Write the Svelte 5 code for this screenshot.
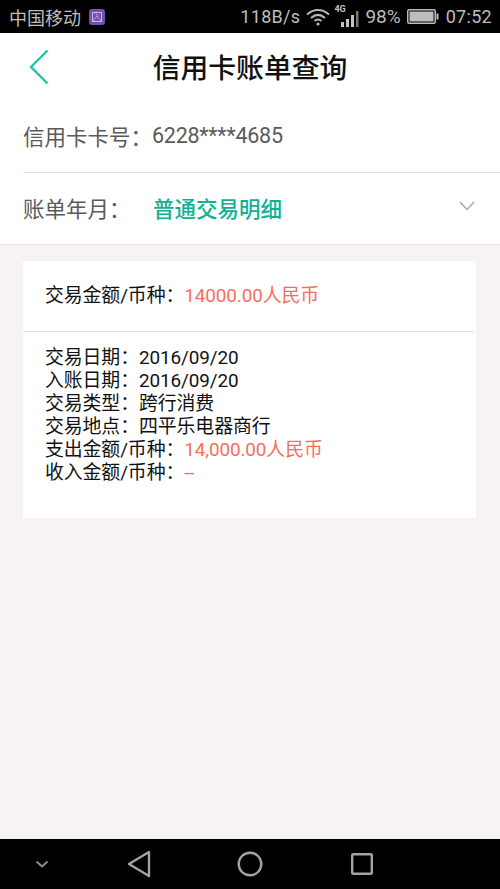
<script>
  const details = [
    { label: "交易日期：", value: "2016/09/20" },
    { label: "入账日期：", value: "2016/09/20" },
    { label: "交易类型：", value: "跨行消费" },
    { label: "交易地点：", value: "四平乐电器商行" },
    { label: "支出金额/币种：", value: "14,000.00人民币", money: true },
    { label: "收入金额/币种：", value: "--", money: true }
  ];
</script>

<div class="page">
  <div class="status">
    <div class="status-left">
      <span>中国移动</span>
      <svg class="sim" viewBox="0 0 16 16" width="16" height="16">
        <rect width="16" height="16" rx="3" fill="#7350b0" />
        <rect x="3.5" y="3.5" width="9" height="9" fill="none" stroke="#c9b6e6" stroke-width="1" />
        <path d="M3.5 12.5 L8 7 M8 7 L12.5 12.5 M6 3.5 L9 7" fill="none" stroke="#c9b6e6" stroke-width="0.8" />
      </svg>
    </div>
    <div class="status-right">
      <span class="speed">118B/s</span>
      <svg class="wifi" viewBox="0 0 24 18" width="24" height="18">
        <path d="M1 6.5 C7.5 0.5 16.5 0.5 23 6.5" fill="none" stroke="#b8b8b8" stroke-width="2" />
        <path d="M5 10 C9.5 6 14.5 6 19 10" fill="none" stroke="#b8b8b8" stroke-width="2" />
        <path d="M8.5 13 C10.7 11.2 13.3 11.2 15.5 13" fill="none" stroke="#b8b8b8" stroke-width="2" />
        <circle cx="12" cy="16" r="1.6" fill="#b8b8b8" />
      </svg>
      <div class="signal">
        <span class="net">4G</span>
        <svg viewBox="0 0 18 16" width="18" height="16">
          <rect x="0" y="11" width="3" height="5" fill="#c4c4c4" />
          <rect x="5" y="8" width="3" height="8" fill="#c4c4c4" />
          <rect x="10" y="4" width="3" height="12" fill="#c4c4c4" />
          <rect x="15" y="0" width="2.5" height="16" fill="#777" />
        </svg>
      </div>
      <span class="pct">98%</span>
      <svg class="battery" viewBox="0 0 32 15" width="32" height="15">
        <rect x="0.75" y="0.75" width="27.5" height="13.5" rx="1.5" fill="none" stroke="#bdbdbd" stroke-width="1.5" />
        <rect x="2.5" y="2.5" width="24" height="10" fill="#bdbdbd" />
        <rect x="29.5" y="4.5" width="2" height="6" fill="#bdbdbd" />
      </svg>
      <span class="time">07:52</span>
    </div>
  </div>

  <div class="top">
    <header>
      <svg class="back" viewBox="0 0 22 36" width="22" height="36">
        <path d="M19.5 1.5 L3 18 L19.5 34.5" fill="none" stroke="#1fc4a6" stroke-width="2.4" />
      </svg>
      <h1>信用卡账单查询</h1>
    </header>

    <div class="row">
      <span class="row-label">信用卡卡号：</span>
      <span class="card-no">6228****4685</span>
    </div>
    <div class="row last">
      <span class="row-label month">账单年月：</span>
      <span class="kind">普通交易明细</span>
      <svg class="chevron" viewBox="0 0 16 10" width="16" height="10">
        <path d="M1 1 L8 8.5 L15 1" fill="none" stroke="#a9a9a9" stroke-width="1.5" />
      </svg>
    </div>
  </div>

  <main>
    <section class="card">
      <div class="summary">
        <span>交易金额/币种：</span><span class="money">14000.00人民币</span>
      </div>
      <div class="list">
        {#each details as d}
          <div class="line">
            <span>{d.label}</span><span class:money={d.money}>{d.value}</span>
          </div>
        {/each}
      </div>
    </section>
  </main>

  <nav>
    <svg class="hide" viewBox="0 0 14 8" width="14" height="8">
      <path d="M1.5 1.5 L7 6.5 L12.5 1.5" fill="none" stroke="#8c8c8c" stroke-width="2" />
    </svg>
    <svg class="nav-back" viewBox="0 0 24 28" width="24" height="28">
      <path d="M2 14 L22 2 L22 26 Z" fill="none" stroke="#a3a3a3" stroke-width="2.4" stroke-linejoin="round" />
    </svg>
    <svg class="home" viewBox="0 0 26 26" width="26" height="26">
      <circle cx="13" cy="13" r="11.3" fill="none" stroke="#a3a3a3" stroke-width="2.4" />
    </svg>
    <svg class="recent" viewBox="0 0 22 22" width="22" height="22">
      <rect x="1.2" y="1.2" width="19.6" height="19.6" rx="1" fill="none" stroke="#a3a3a3" stroke-width="2.4" />
    </svg>
  </nav>
</div>

<style>
  :global(body) {
    margin: 0;
    background: #f6f2f6;
  }

  .page {
    width: 500px;
    height: 889px;
    display: flex;
    flex-direction: column;
    background: #f6f2f6;
    font-family: Roboto, "Noto Sans CJK SC", sans-serif;
    overflow: hidden;
  }

  /* status bar */
  .status {
    height: 33px;
    flex: none;
    background: #000;
    color: #bdbdbd;
    display: flex;
    justify-content: space-between;
    align-items: center;
    padding: 0 8px 0 9px;
    font-size: 18px;
  }
  .status-left,
  .status-right {
    display: flex;
    align-items: center;
  }
  .sim { margin-left: 8px; }
  .speed { margin-right: 6px; letter-spacing: 0.3px; }
  .signal {
    position: relative;
    width: 20px;
    height: 20px;
    margin-left: 9px;
    display: flex;
    align-items: flex-end;
    justify-content: flex-end;
  }
  .net {
    position: absolute;
    left: -5px;
    top: -3px;
    font-size: 9px;
    font-weight: 700;
    color: #c4c4c4;
  }
  .pct { margin-left: 6px; font-size: 19px; }
  .battery { margin-left: 6px; }
  .time { margin-left: 7px; letter-spacing: 0.3px; }

  /* top block */
  .top {
    background: #fff;
    border-bottom: 1px solid #e4e2e5;
    flex: none;
  }
  header {
    height: 68px;
    position: relative;
    display: flex;
    align-items: center;
    justify-content: center;
    padding-bottom: 3px;
    box-sizing: border-box;
  }
  .back {
    position: absolute;
    left: 28px;
    top: 16px;
  }
  h1 {
    margin: 0;
    font-size: 27.8px;
    font-weight: 500;
    color: #111;
    font-family: "Noto Sans CJK SC", sans-serif;
  }
  .row {
    margin-left: 23px;
    height: 72px;
    padding-bottom: 2px;
    border-bottom: 1px solid #e0e0e0;
    display: flex;
    align-items: center;
    font-size: 21.5px;
    color: #5a5a5a;
    box-sizing: border-box;
  }
  .row.last {
    border-bottom: none;
    height: 71px;
    padding: 0 26px 2px 0;
  }
  .row-label { font-family: "Noto Sans CJK SC", sans-serif; }
  .card-no { letter-spacing: -0.25px; }
  .month { width: 131px; flex: none; }
  .kind {
    color: #14ae94;
    flex: 1;
    font-weight: 500;
    margin-left: -1px;
    font-family: "Noto Sans CJK SC", sans-serif;
  }
  .chevron {
    margin: 0 -1px 4px 0;
  }

  /* card */
  main {
    flex: 1;
    padding: 16px 24px 0 23px;
  }
  .card {
    background: #fff;
    height: 257px;
    font-size: 18.9px;
    line-height: 23px;
    color: #111;
    letter-spacing: -0.1px;
  }
  .summary {
    height: 69px;
    margin-right: 2px;
    padding: 0 0 1px 22px;
    display: flex;
    align-items: center;
    border-bottom: 1px solid #e2e2e2;
  }
  .list { padding: 14px 0 0 22px; }
  .money { color: #f56f5c; }

  /* nav bar */
  nav {
    height: 50px;
    flex: none;
    background: #000;
    position: relative;
    display: flex;
    align-items: center;
  }
  .hide { margin-left: 35px; }
  .nav-back { margin-left: 78px; }
  .home { margin-left: 86px; }
  .recent { margin-left: 88px; }
</style>
